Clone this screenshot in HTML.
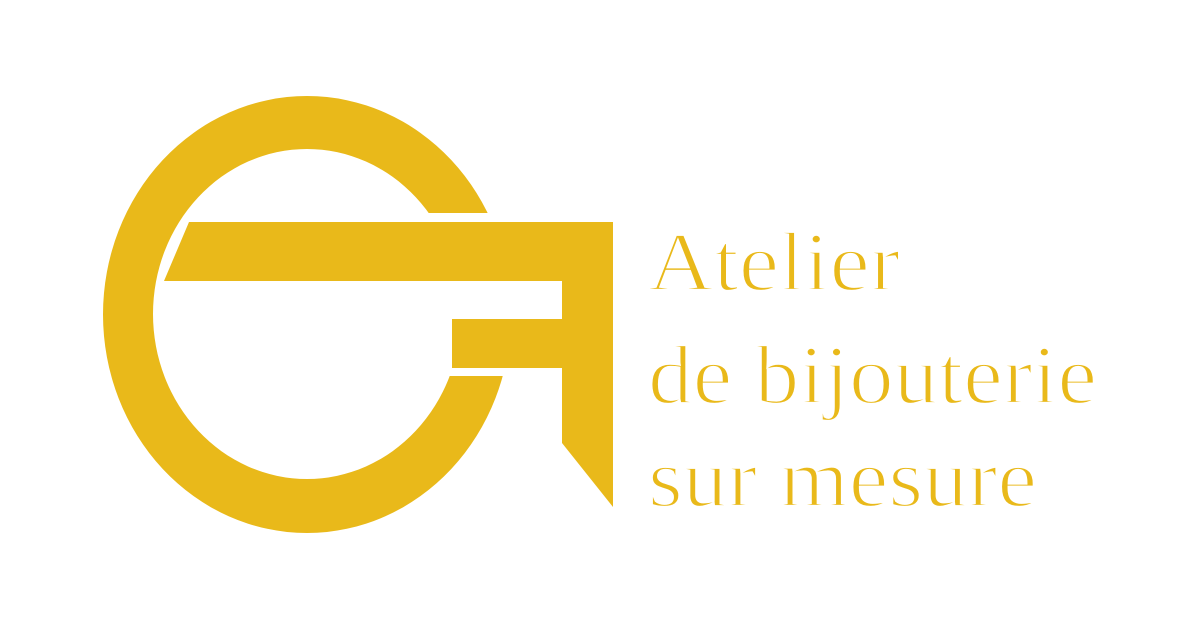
<!DOCTYPE html>
<html><head><style>html,body{margin:0;padding:0;background:#fff;width:1200px;height:630px;overflow:hidden}</style></head>
<body>
<svg width="1200" height="630" viewBox="0 0 1200 630" xmlns="http://www.w3.org/2000/svg">
<defs>
<mask id="m"><rect width="1200" height="630" fill="#fff"/>
<polygon points="420,213 620,213 620,376 420,376" fill="#000"/></mask>
</defs>
<g fill="#E9B91A">
<path mask="url(#m)" fill-rule="evenodd" d="M103,314.5 A204,218.5 0 1,0 511,314.5 A204,218.5 0 1,0 103,314.5 Z M153,314 A154,165 0 1,0 461,314 A154,165 0 1,0 153,314 Z"/>
</g>
<polygon points="185,216 195,216 170,281 160,281" fill="#fff"/>
<polygon points="189,222 613,222 613,507 562,443 562,368 452,368 452,319 562,319 562,281 164,281" fill="#E9B91A"/>
<g fill="#E9B91A" stroke="#fff" stroke-width="2.2" paint-order="fill" font-family="Liberation Serif, serif" font-size="84">
<text x="648" y="290" textLength="252" lengthAdjust="spacingAndGlyphs">Atelier</text>
<text x="648" y="403" textLength="449" lengthAdjust="spacingAndGlyphs">de bijouterie</text>
<text x="648" y="506" textLength="389" lengthAdjust="spacingAndGlyphs">sur mesure</text>
</g>
</svg>
</body></html>
